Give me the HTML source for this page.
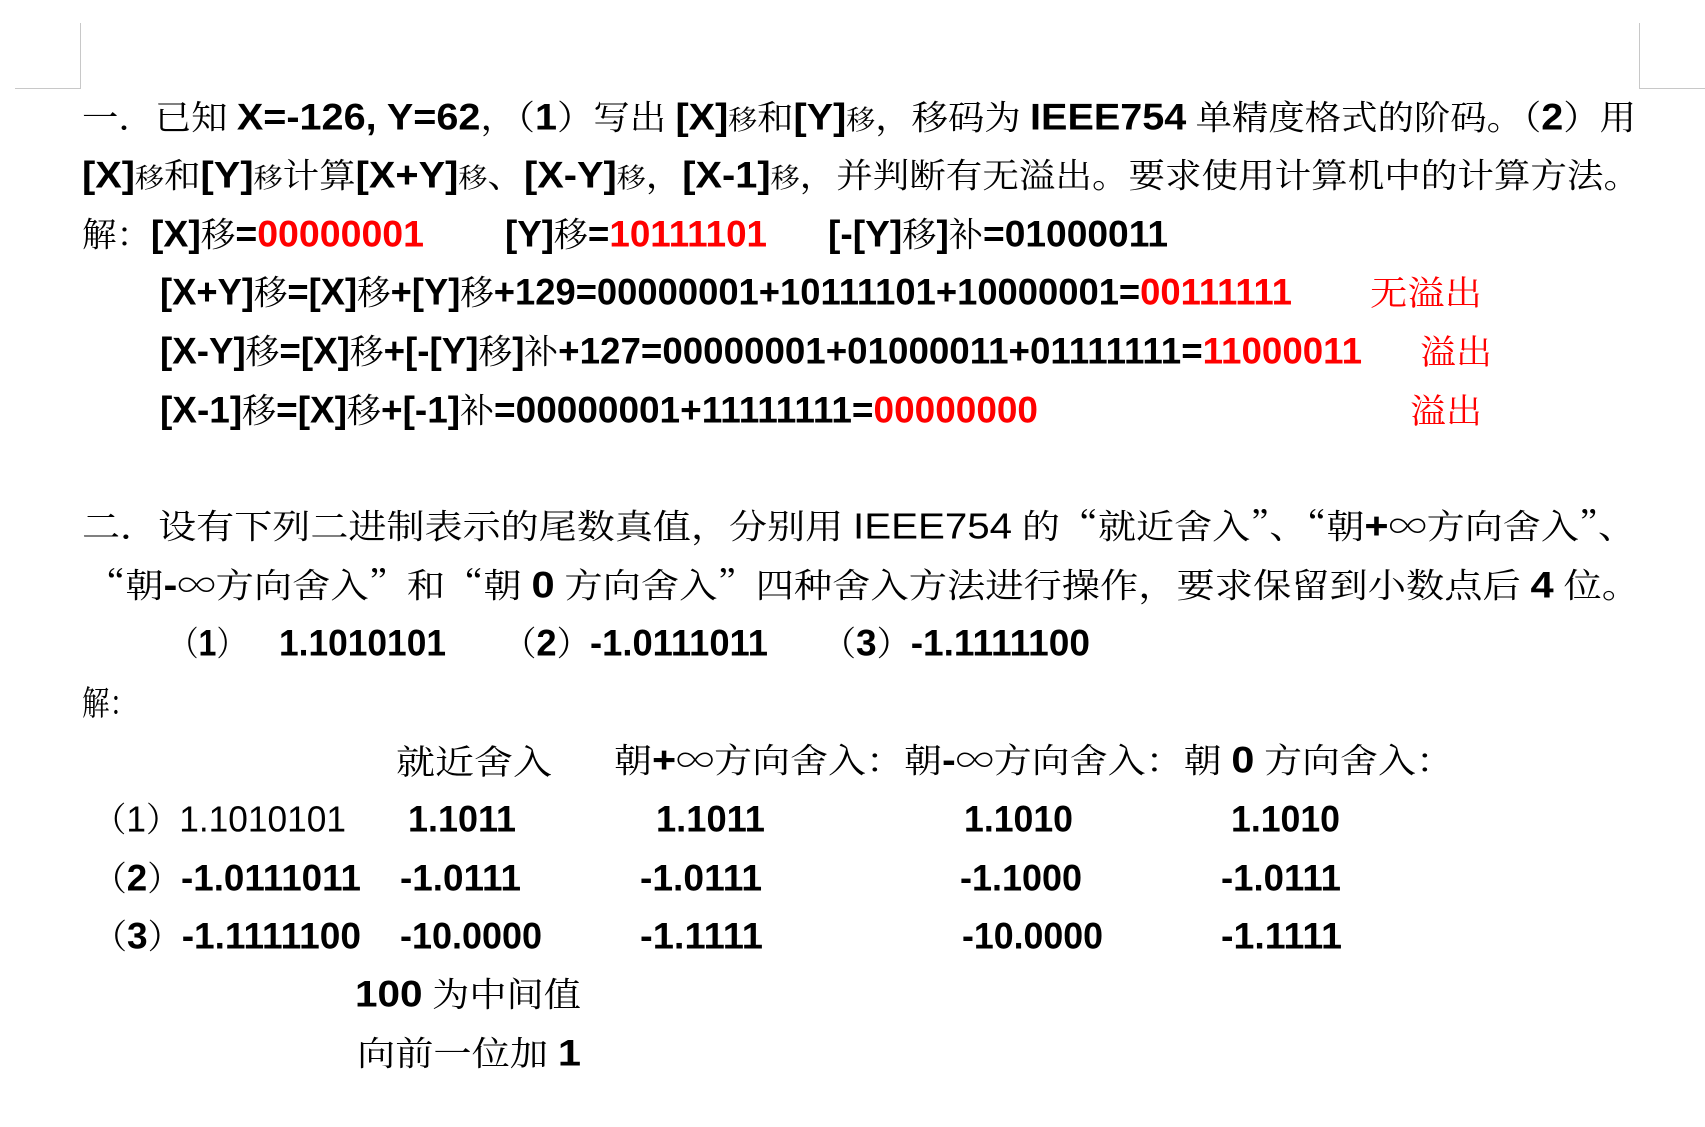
<!DOCTYPE html>
<html><head><meta charset="utf-8">
<style>
html,body{margin:0;padding:0;background:#fff;}
body{width:1705px;height:1127px;position:relative;overflow:hidden;font-family:"Noto Serif CJK SC","Liberation Serif",serif;color:#000;}
.f{position:absolute;white-space:nowrap;font-size:34px;line-height:1;transform-origin:left center;}
.f>span.in{display:inline-block;}
b{font-family:"Liberation Sans","Noto Sans CJK SC",sans-serif;font-weight:bold;font-size:37px;}
.n{font-family:"Liberation Sans",sans-serif;font-size:36px;}
.r{color:#f00;}
.s{font-size:27px;}
.cl{position:absolute;background:#c8c8c8;}
</style></head><body>
<div class="cl" style="left:80px;top:23px;width:1px;height:65px"></div>
<div class="cl" style="left:15px;top:88px;width:66px;height:1px"></div>
<div class="cl" style="left:1639px;top:23px;width:1px;height:65px"></div>
<div class="cl" style="left:1639px;top:88px;width:66px;height:1px"></div>

<div class="f" style="left:82px;top:117px;width:1554px"><span class="in">一．已知 <b>X=-126, Y=62</b>，（<b>1</b>）写出 <b>[X]</b><span class="s">移</span>和<b>[Y]</b><span class="s">移</span>，移码为 <b>IEEE754</b> 单精度格式的阶码。（<b>2</b>）用</span></div>
<div class="f" style="left:82px;top:175px;width:1558px"><span class="in"><b>[X]</b><span class="s">移</span>和<b>[Y]</b><span class="s">移</span>计算<b>[X+Y]</b><span class="s">移</span>、<b>[X-Y]</b><span class="s">移</span>，<b>[X-1]</b><span class="s">移</span>，并判断有无溢出。要求使用计算机中的计算方法。</span></div>
<div class="f" style="left:82px;top:234px;width:342px"><span class="in">解：<b>[X]</b>移<b>=</b><b class="r">00000001</b></span></div>
<div class="f" style="left:505px;top:234px;width:262px"><span class="in"><b>[Y]</b>移<b>=</b><b class="r">10111101</b></span></div>
<div class="f" style="left:828px;top:234px;width:340px"><span class="in"><b>[-[Y]</b>移<b>]</b>补<b>=01000011</b></span></div>

<div class="f" style="left:160px;top:292px;width:1132px"><span class="in"><b>[X+Y]</b>移<b>=[X]</b>移<b>+[Y]</b>移<b>+129=00000001+10111101+10000001=</b><b class="r">00111111</b></span></div>
<div class="f r" style="left:1370px;top:291px;width:112px"><span class="in">无溢出</span></div>
<div class="f" style="left:160px;top:351px;width:1202px"><span class="in"><b>[X-Y]</b>移<b>=[X]</b>移<b>+[-[Y]</b>移<b>]</b>补<b>+127=00000001+01000011+01111111=</b><b class="r">11000011</b></span></div>
<div class="f r" style="left:1420px;top:350px;width:72px"><span class="in">溢出</span></div>
<div class="f" style="left:160px;top:410px;width:878px"><span class="in"><b>[X-1]</b>移<b>=[X]</b>移<b>+[-1]</b>补<b>=00000001+11111111=</b><b class="r">00000000</b></span></div>
<div class="f r" style="left:1410px;top:409px;width:72px"><span class="in">溢出</span></div>

<div class="f" style="left:82px;top:526px;width:1554px"><span class="in">二．设有下列二进制表示的尾数真值，分别用 <span class="n">IEEE754</span> 的“就近舍入”、“朝<b>+</b>∞方向舍入”、</span></div>
<div class="f" style="left:87px;top:585px;width:1553px"><span class="in">“朝<b>-</b>∞方向舍入”和“朝 <b>0</b> 方向舍入”四种舍入方法进行操作，要求保留到小数点后 <b>4</b> 位。</span></div>
<div class="f" style="left:169px;top:643px;width:77px"><span class="in">（<b>1</b>）</span></div>
<div class="f" style="left:279px;top:643px;width:167px"><span class="in"><b>1.1010101</b></span></div>
<div class="f" style="left:503px;top:643px;width:265px"><span class="in">（<b>2</b>）<b>-1.0111011</b></span></div>
<div class="f" style="left:822px;top:643px;width:268px"><span class="in">（<b>3</b>）<b>-1.1111100</b></span></div>
<div class="f" style="left:82px;top:701px;width:55px"><span class="in">解：</span></div>

<div class="f" style="left:396px;top:760px;width:156px"><span class="in">就近舍入</span></div>
<div class="f" style="left:614px;top:760px;width:840px"><span class="in">朝<b>+</b>∞方向舍入：朝<b>-</b>∞方向舍入：朝 <b>0</b> 方向舍入：</span></div>

<div class="f" style="left:93px;top:819px;width:253px"><span class="in">（<span class="n">1</span>）<span class="n">1.1010101</span></span></div>
<div class="f" style="left:408px;top:819px;width:108px"><span class="in"><b>1.1011</b></span></div>
<div class="f" style="left:656px;top:819px;width:109px"><span class="in"><b>1.1011</b></span></div>
<div class="f" style="left:964px;top:819px;width:109px"><span class="in"><b>1.1010</b></span></div>
<div class="f" style="left:1231px;top:819px;width:109px"><span class="in"><b>1.1010</b></span></div>

<div class="f" style="left:93px;top:878px;width:268px"><span class="in">（<b>2</b>）<b>-1.0111011</b></span></div>
<div class="f" style="left:400px;top:878px;width:121px"><span class="in"><b>-1.0111</b></span></div>
<div class="f" style="left:640px;top:878px;width:122px"><span class="in"><b>-1.0111</b></span></div>
<div class="f" style="left:960px;top:878px;width:122px"><span class="in"><b>-1.1000</b></span></div>
<div class="f" style="left:1221px;top:878px;width:120px"><span class="in"><b>-1.0111</b></span></div>

<div class="f" style="left:93px;top:936px;width:268px"><span class="in">（<b>3</b>）<b>-1.1111100</b></span></div>
<div class="f" style="left:400px;top:936px;width:142px"><span class="in"><b>-10.0000</b></span></div>
<div class="f" style="left:640px;top:936px;width:123px"><span class="in"><b>-1.1111</b></span></div>
<div class="f" style="left:962px;top:936px;width:141px"><span class="in"><b>-10.0000</b></span></div>
<div class="f" style="left:1221px;top:936px;width:121px"><span class="in"><b>-1.1111</b></span></div>

<div class="f" style="left:355px;top:994px;width:226px"><span class="in"><b>100</b> 为中间值</span></div>
<div class="f" style="left:357px;top:1053px;width:224px"><span class="in">向前一位加 <b>1</b></span></div>

<script>
document.querySelectorAll('.f').forEach(function(el){
  var W=parseFloat(el.style.width);
  var inner=el.querySelector('.in');
  var w=inner.getBoundingClientRect().width;
  var s=w>0?W/w:1;
  el.style.width='auto';
  el.style.transform='translateY(-50%) scaleX('+s+')';
});
</script>
</body></html>
